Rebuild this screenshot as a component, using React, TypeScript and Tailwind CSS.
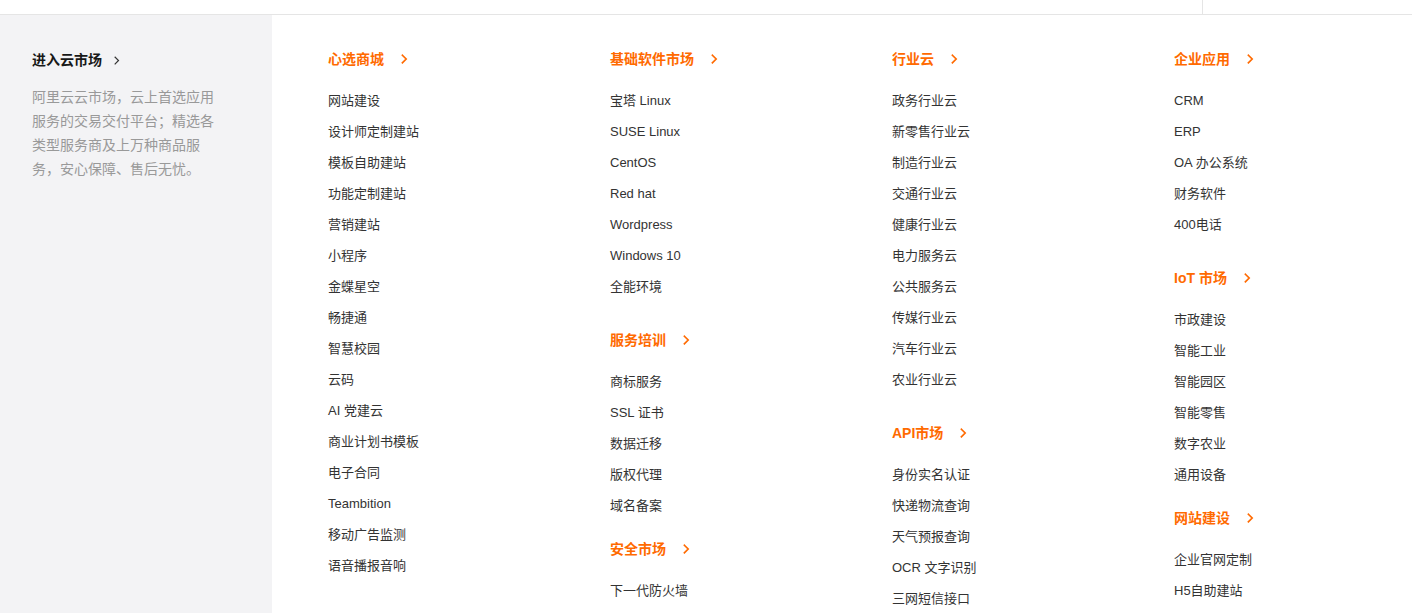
import React from "react";

type Group = { title: string; mt?: string; items: string[] };

const columns: Group[][] = [
  [
    {
      title: "心选商城",
      items: [
        "网站建设",
        "设计师定制建站",
        "模板自助建站",
        "功能定制建站",
        "营销建站",
        "小程序",
        "金蝶星空",
        "畅捷通",
        "智慧校园",
        "云码",
        "AI 党建云",
        "商业计划书模板",
        "电子合同",
        "Teambition",
        "移动广告监测",
        "语音播报音响",
      ],
    },
  ],
  [
    {
      title: "基础软件市场",
      items: ["宝塔 Linux", "SUSE Linux", "CentOS", "Red hat", "Wordpress", "Windows 10", "全能环境"],
    },
    { title: "服务培训", mt: "mt-[28px]", items: ["商标服务", "SSL 证书", "数据迁移", "版权代理", "域名备案"] },
    { title: "安全市场", mt: "mt-[18px]", items: ["下一代防火墙"] },
  ],
  [
    {
      title: "行业云",
      items: [
        "政务行业云",
        "新零售行业云",
        "制造行业云",
        "交通行业云",
        "健康行业云",
        "电力服务云",
        "公共服务云",
        "传媒行业云",
        "汽车行业云",
        "农业行业云",
      ],
    },
    {
      title: "API市场",
      mt: "mt-[28px]",
      items: ["身份实名认证", "快递物流查询", "天气预报查询", "OCR 文字识别", "三网短信接口"],
    },
  ],
  [
    { title: "企业应用", items: ["CRM", "ERP", "OA 办公系统", "财务软件", "400电话"] },
    {
      title: "IoT 市场",
      mt: "mt-[28px]",
      items: ["市政建设", "智能工业", "智能园区", "智能零售", "数字农业", "通用设备"],
    },
    { title: "网站建设", mt: "mt-[18px]", items: ["企业官网定制", "H5自助建站"] },
  ],
];

function Chevron({ className, strokeWidth = 2 }: { className?: string; strokeWidth?: number }) {
  return (
    <svg viewBox="0 0 8 12" className={className} fill="none">
      <path d="M1.5 1.5L6 6l-4.5 4.5" stroke="currentColor" strokeWidth={strokeWidth} strokeLinecap="square" />
    </svg>
  );
}

export default function App() {
  return (
    <div
      className="w-full h-[613px] overflow-hidden bg-white"
      style={{ fontFamily: '"Liberation Sans", "Noto Sans CJK SC", sans-serif' }}
    >
      {/* top strip */}
      <div className="h-[15px] flex border-b border-[#e5e5e5]">
        <div className="flex-1" />
        <div className="w-[210px] border-l border-[#e5e5e5]" />
      </div>

      <div className="flex h-[598px]">
        {/* Left intro panel */}
        <aside className="w-[272px] shrink-0 bg-[#f3f3f5] pl-8 pt-[35px]">
          <div className="flex items-center h-5 text-sm font-semibold text-[#181818]">
            进入云市场
            <Chevron className="w-[6px] h-[9px] ml-[12px] text-[#333]" strokeWidth={1.6} />
          </div>
          <p className="mt-[15px] w-[190px] text-sm leading-6 text-[#999]">
            阿里云云市场，云上首选应用服务的交易交付平台；精选各类型服务商及上万种商品服务，安心保障、售后无忧。
          </p>
        </aside>

        {/* Category columns */}
        <div className="flex pl-[56px] pt-[34px]">
          {columns.map((groups, ci) => (
            <div key={ci} className="w-[282px] flex flex-col">
              {groups.map((g) => (
                <div key={g.title} className={g.mt ?? ""}>
                  <div className="flex items-center h-5 text-sm font-semibold text-[#ff6a00] mb-4">
                    {g.title}
                    <Chevron className="w-[7px] h-[10px] ml-[17px]" strokeWidth={2} />
                  </div>
                  <ul>
                    {g.items.map((it) => (
                      <li key={it} className="h-[31px] flex items-center text-[13px] text-[#333]">
                        {it}
                      </li>
                    ))}
                  </ul>
                </div>
              ))}
            </div>
          ))}
        </div>
      </div>
    </div>
  );
}
